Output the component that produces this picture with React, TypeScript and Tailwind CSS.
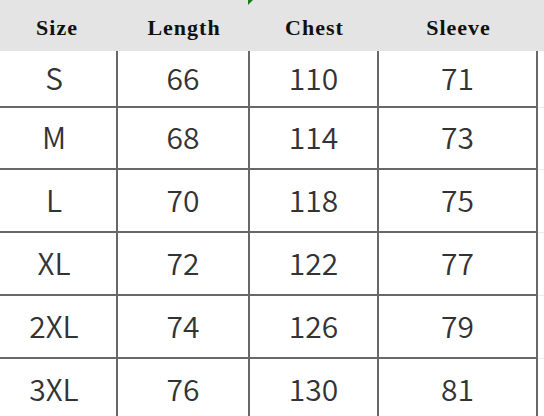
const headers = ["Size", "Length", "Chest", "Sleeve"];

const rows = [
  { size: "S", length: "66", chest: "110", sleeve: "71", h: "h-[57px]" },
  { size: "M", length: "68", chest: "114", sleeve: "73", h: "h-[62px]" },
  { size: "L", length: "70", chest: "118", sleeve: "75", h: "h-[63px]" },
  { size: "XL", length: "72", chest: "122", sleeve: "77", h: "h-[63px]" },
  { size: "2XL", length: "74", chest: "126", sleeve: "79", h: "h-[63px]" },
  { size: "3XL", length: "76", chest: "130", sleeve: "81", h: "h-[63px]" },
];

const cols = "grid grid-cols-[118px_132px_129px_159px_1fr]";

export default function App() {
  return (
    <main className="relative w-[544px] h-[416px] overflow-hidden bg-white">
      {/* tiny green corner mark */}
      <div className="absolute left-[248px] top-0 w-0 h-0 border-t-[5px] border-r-[5px] border-t-[#1c7a1c] border-r-transparent" />

      <div className={`${cols} h-[51px] bg-[#e4e4e4] items-center pt-[4px] text-[22px] font-bold tracking-[1px] text-[#111] [font-family:'Liberation_Serif',serif]`}>
        {headers.map((h, i) => (
          <div key={h} className={`text-center ${i === 0 ? "pr-1" : ""}`}>
            {h}
          </div>
        ))}
        <div />
      </div>

      {rows.map((r) => (
        <div key={r.size} className={`${cols} ${r.h} text-[30px] font-[350] text-[#333] [font-family:'Noto_Sans_CJK_SC','Noto_Sans',sans-serif]`}>
          {[r.size, r.length, r.chest, r.sleeve].map((v, i) => (
            <div
              key={i}
              className={`flex items-center justify-center pb-[3px] border-r-2 border-b-2 border-[#686868] ${i === 0 ? "pr-2" : ""}`}
            >
              {v}
            </div>
          ))}
          <div className="border-b border-[#ececec]" />
        </div>
      ))}
    </main>
  );
}
